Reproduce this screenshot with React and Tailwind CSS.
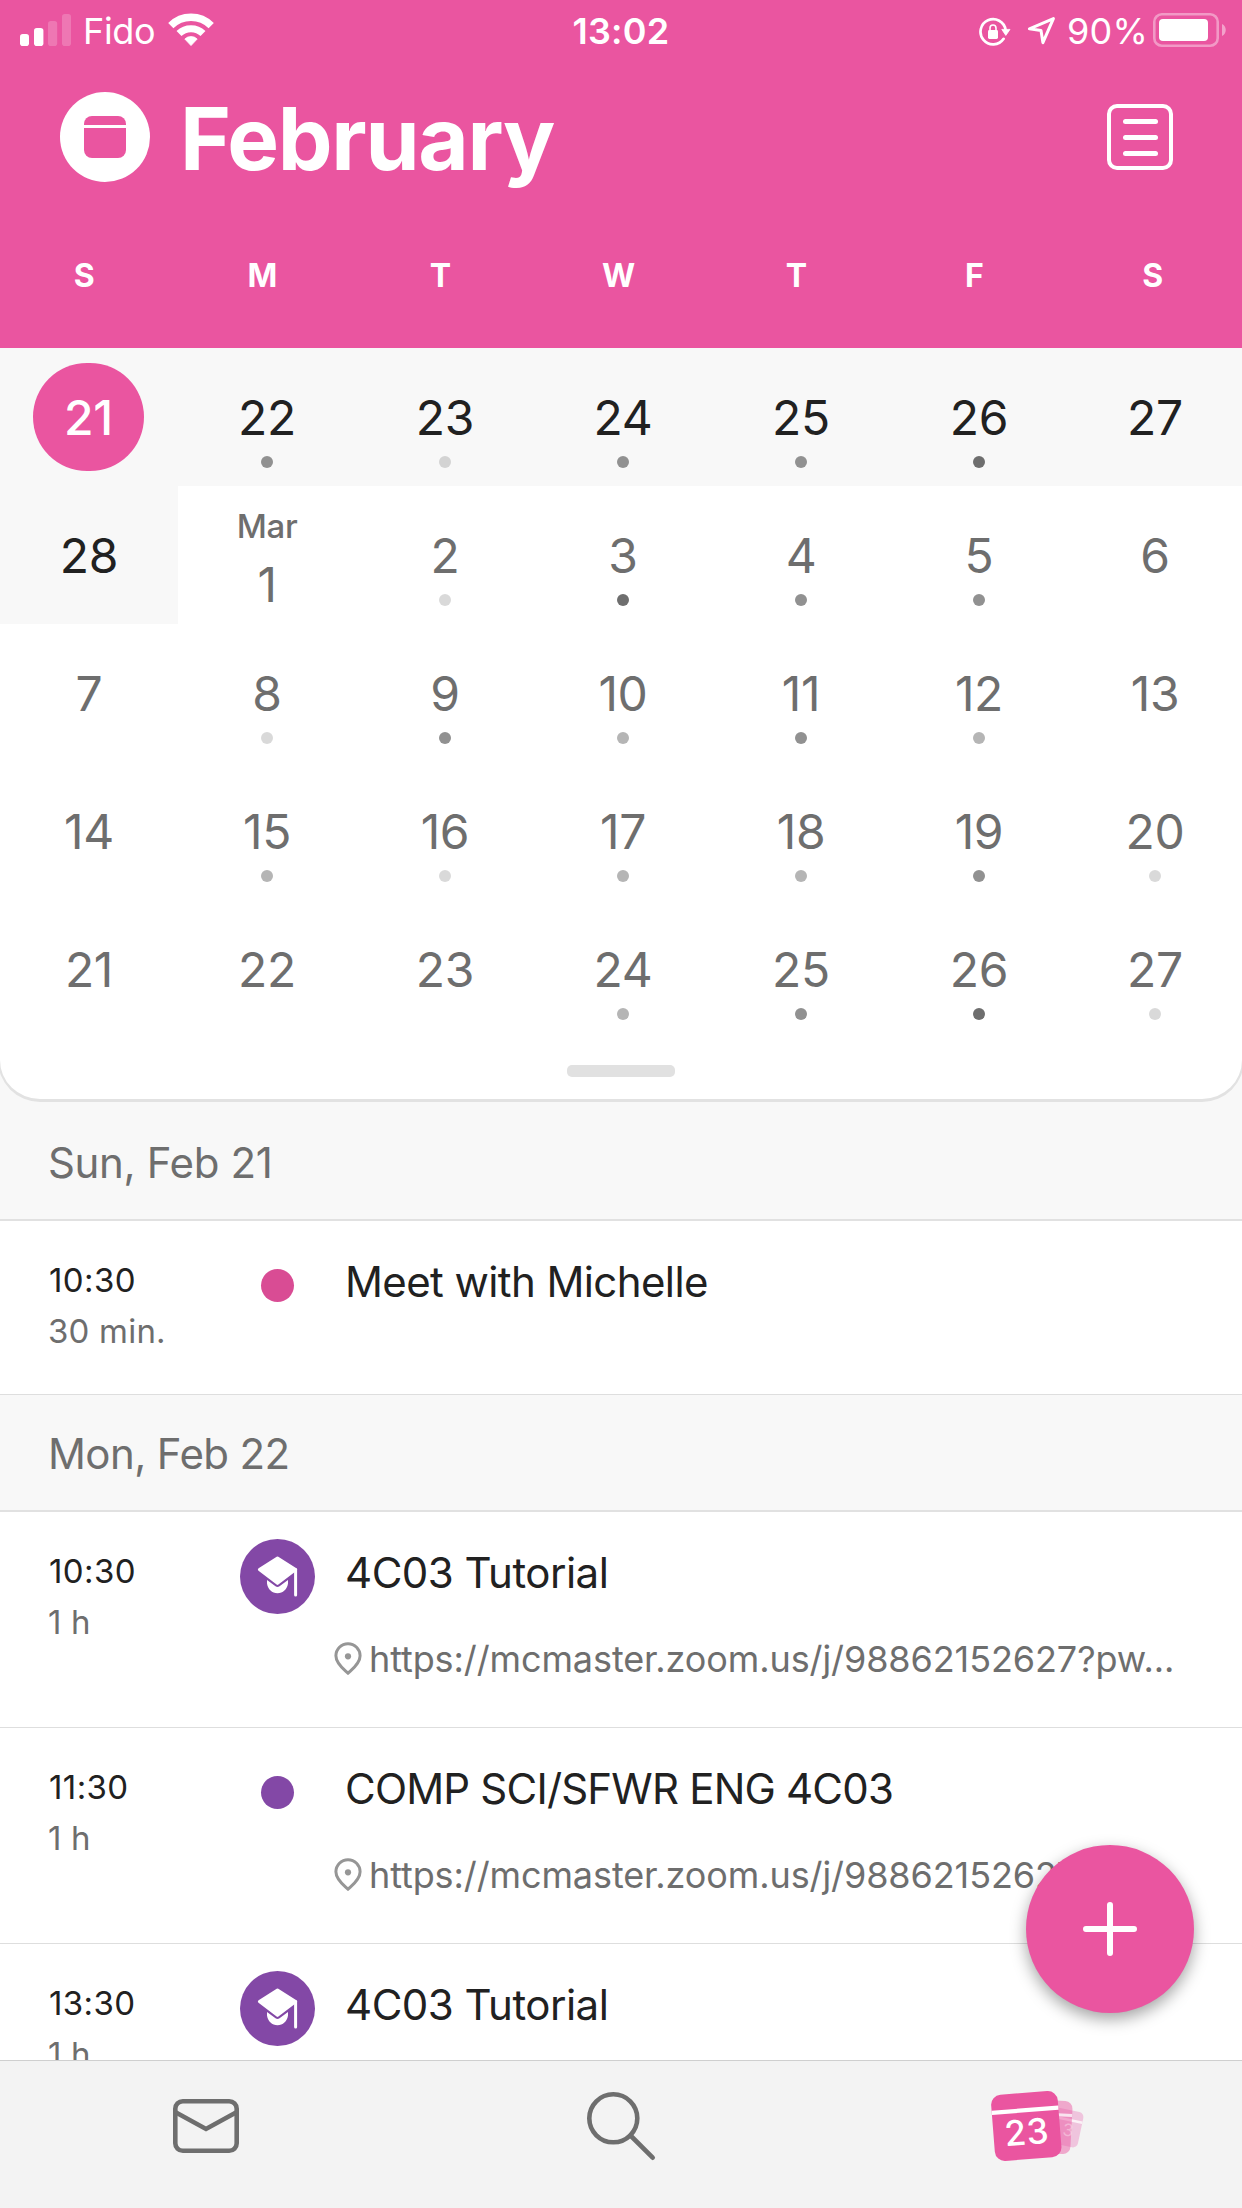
import React from "react";

const WEEKDAYS = ["S", "M", "T", "W", "T", "F", "S"];

// Each day: [label, event density 0-4]
const WEEKS = [
  [["21", 0], ["22", 3], ["23", 1], ["24", 3], ["25", 3], ["26", 4], ["27", 0]],
  [["28", 0], ["1", 0], ["2", 1], ["3", 4], ["4", 3], ["5", 3], ["6", 0]],
  [["7", 0], ["8", 1], ["9", 3], ["10", 2], ["11", 3], ["12", 2], ["13", 0]],
  [["14", 0], ["15", 2], ["16", 1], ["17", 2], ["18", 2], ["19", 3], ["20", 1]],
  [["21", 0], ["22", 0], ["23", 0], ["24", 2], ["25", 3], ["26", 4], ["27", 1]],
];

const DOT = {
  1: "bg-black/15",
  2: "bg-[#b5b5b5]",
  3: "bg-[#919191]",
  4: "bg-[#6e6e6e]",
};

const URL_TEXT = "https://mcmaster.zoom.us/j/98862152627?pw...";

function StatusBar() {
  return (
    <div className="grid h-[60px] grid-cols-3 text-[36px] leading-[44px] text-white">
      <div className="flex items-center pl-5">
        <svg width="51" height="32" viewBox="0 0 51 32" fill="#fff" className="shrink-0">
          <rect x="0" y="20" width="9" height="12" rx="2.8" />
          <rect x="14" y="14" width="9.4" height="18" rx="2.8" />
          <rect x="28" y="7" width="9.2" height="25" rx="2.8" opacity="0.2" />
          <rect x="42" y="0" width="9" height="32" rx="2.8" opacity="0.2" />
        </svg>
        <span className="ml-[12px] mt-[2px] w-[73px] tracking-[-0.3px]">Fido</span>
        <svg width="46" height="34" viewBox="0 0 46 34" className="ml-[12px] shrink-0" fill="none" stroke="#fff">
          <path d="M2.8 12.6 A28.6 28.6 0 0 1 43.2 12.6" strokeWidth="7.4" />
          <path d="M11 20.6 A17 17 0 0 1 35 20.6" strokeWidth="7" />
          <path d="M16.8 26 A9 9 0 0 1 29.2 26 L23 32.6 Z" fill="#fff" strokeWidth="0.8" strokeLinejoin="round" />
        </svg>
      </div>
      <div className="flex items-center justify-center">
        <span className="mt-[2px] font-semibold tracking-[0.2px]">13:02</span>
      </div>
      <div className="flex items-center justify-end pr-[15px]">
        <svg width="33" height="32" viewBox="978 16 33 32" className="mt-[3px] shrink-0">
          <path d="M1003.6 38.8 A12.6 12.6 0 1 1 1005.6 30" fill="none" stroke="#fff" strokeWidth="2.7" strokeLinecap="round" />
          <path d="M1001.8 29.4 H1010 L1005.8 35.4 Z" fill="#fff" stroke="#fff" strokeWidth="0.8" strokeLinejoin="round" />
          <rect x="988" y="30" width="10" height="9" rx="1.4" fill="#fff" />
          <path d="M990 31 V28 a3 3 0 0 1 6 0 V31" fill="none" stroke="#fff" strokeWidth="1.6" />
        </svg>
        <svg width="30" height="30" viewBox="1027 16 30 30" className="ml-[16px] mt-[1px] shrink-0">
          <path d="M1029.4 28.8 L1053.4 18.6 L1042.9 42.6 L1041 30.4 Z" fill="none" stroke="#fff" strokeWidth="3" strokeLinejoin="round" />
        </svg>
        <span className="ml-[10px] mt-[2px] tracking-[0.2px]">90%</span>
        <svg width="74" height="34" viewBox="0 0 74 34" className="ml-[5px] shrink-0">
          <rect x="1.3" y="1.3" width="63.4" height="31.4" rx="7.5" fill="none" stroke="#fff" strokeOpacity="0.4" strokeWidth="2.6" />
          <rect x="6" y="6" width="49" height="22" rx="4" fill="#fff" />
          <path d="M69 11 C74 13 74 21 69 23 Z" fill="#fff" opacity="0.45" />
        </svg>
      </div>
    </div>
  );
}

function Header() {
  return (
    <header className="flex h-[348px] shrink-0 flex-col bg-[#ea55a0] text-white">
      <StatusBar />
      <div className="flex h-[154px] items-center pl-[60px] pr-[69px]">
        <div className="flex size-[90px] items-center justify-center rounded-full bg-white">
          <div className="flex h-[42px] w-[42px] flex-col overflow-hidden rounded-[8px] bg-[#ea55a0] pt-[9px]">
            <div className="h-[3px] bg-white" />
          </div>
        </div>
        <h1 className="ml-[30px] mt-[3px] text-[87px] font-bold leading-[106px] tracking-[-1.3px]">February</h1>
        <div className="ml-auto flex size-[66px] flex-col items-center justify-center gap-[11px] rounded-[10px] border-[4.5px] border-white">
          <div className="h-[5px] w-[35px] rounded-full bg-white" />
          <div className="h-[5px] w-[35px] rounded-full bg-white" />
          <div className="h-[5px] w-[35px] rounded-full bg-white" />
        </div>
      </div>
      <div className="grid h-[124px] grid-cols-[173.5px_repeat(5,178px)_178.5px] items-center text-center text-[32px] font-bold">
        {WEEKDAYS.map((d, i) => (
          <div key={i} className={i === 0 ? "pr-[5px]" : ""}>
            {d}
          </div>
        ))}
      </div>
    </header>
  );
}

function Day({ label, density, february, selected, month }) {
  if (selected) {
    return (
      <div className="flex h-[138px] bg-[#f8f8f8] pl-[33px] pt-[15px]">
        <div className="flex h-[108px] w-[111px] items-center justify-center rounded-full bg-[#ea55a0] font-medium text-white">
          {label}
        </div>
      </div>
    );
  }
  return (
    <div
      className={
        "flex h-[138px] flex-col items-center " +
        (february ? "bg-[#f8f8f8] text-[#212121] " : "text-[#6e6e6e] ") +
        (month ? "pt-[20px]" : "pt-[40px]")
      }
    >
      {month && <span className="mb-[9px] text-[33px] font-medium leading-[40px]">{month}</span>}
      <span>{label}</span>
      {density > 0 && <span className={"mt-[9px] size-[12px] rounded-full " + DOT[density]} />}
    </div>
  );
}

function MonthGrid() {
  return (
    <section className="-mx-[2px] shrink-0 rounded-b-[42px] border-x-2 border-b-[3px] border-[#e2e2e2] bg-white">
      <div className="grid grid-cols-[repeat(6,178px)_174px] text-[48px] leading-[59px] tracking-[-0.3px]">
        {WEEKS.flatMap((week, w) =>
          week.map(([label, density], d) => (
            <Day
              key={w + "-" + d}
              label={label}
              density={density}
              february={w === 0 || (w === 1 && d === 0)}
              selected={w === 0 && d === 0}
              month={w === 1 && d === 1 ? "Mar" : null}
            />
          ))
        )}
      </div>
      <div className="flex h-[61px] justify-center pt-[27px]">
        <div className="h-[12px] w-[108px] rounded-[5px] bg-[#e1e1e1]" />
      </div>
    </section>
  );
}

function CapIcon() {
  return (
    <svg width="75" height="75" viewBox="0 0 75 75">
      <circle cx="37.5" cy="37.5" r="37.5" fill="#8348a6" />
      <path d="M37.5 19 L55.6 30.6 L37.5 44.4 L19.4 30.6 Z" fill="#fff" stroke="#fff" strokeWidth="3" strokeLinejoin="round" />
      <path d="M27 41 L35.5 47.2 Q37.5 48.6 39.5 47.2 L48 41 V44.5 C47 50.5 43 54.2 37.5 54.2 C32 54.2 28 50.5 27 44.5 Z" fill="#fff" />
      <path d="M55.6 30.5 V56" stroke="#fff" strokeWidth="3" strokeLinecap="round" />
    </svg>
  );
}

function PinIcon() {
  return (
    <svg width="28" height="34" viewBox="0 0 28 34" className="shrink-0">
      <path d="M14 31.3 C10.5 27.8 1.9 22 1.9 13.8 A12.1 12.1 0 0 1 26.1 13.8 C26.1 22 17.5 27.8 14 31.3 Z" fill="none" stroke="#969696" strokeWidth="3" strokeLinejoin="round" />
      <circle cx="14" cy="14.3" r="3.1" fill="#969696" />
    </svg>
  );
}

function SectionTitle({ children, className }) {
  return (
    <div className={"flex h-[117px] shrink-0 items-center border-b-2 border-[#e1e1e1] bg-[#f8f8f8] pl-[48px] pt-[1px] text-[42px] leading-[51px] text-[#6e6e6e] " + className}>
      {children}
    </div>
  );
}

function Event({ time, duration, title, marker, location, titleClass }) {
  return (
    <div className={"flex shrink-0 border-b border-[#dedede] bg-white pl-[49px] " + (location ? "h-[216px]" : "h-[174px]")}>
      <div className="w-[190.5px] shrink-0 pt-[34px] text-[33px] leading-[51px]">
        <div className="tracking-[0.4px] text-[#212121]">{time}</div>
        <div className="-ml-[1px] tracking-[0.2px] text-[#6e6e6e]">{duration}</div>
      </div>
      <div className="mt-[27px] flex size-[75px] shrink-0 items-center justify-center">
        {marker === "cap" ? (
          <CapIcon />
        ) : (
          <div className={"size-[33px] rounded-full " + (marker === "pink" ? "bg-[#d94c94]" : "bg-[#8348a6]")} />
        )}
      </div>
      <div className="ml-[19.5px] pt-[31px]">
        <div className={"whitespace-nowrap pl-[11px] text-[42px] leading-[60px] text-[#212121] " + titleClass}>{title}</div>
        {location && (
          <div className="mt-[34px] flex items-center text-[36px] leading-[44px] tracking-[-0.1px] text-[#6e6e6e]">
            <PinIcon />
            <span className="ml-[7px] whitespace-nowrap">{URL_TEXT}</span>
          </div>
        )}
      </div>
    </div>
  );
}

function MailIcon() {
  return (
    <svg width="120" height="110" viewBox="0 0 120 110" fill="none" stroke="#6e6e6e" strokeWidth="4.6">
      <rect x="28.3" y="30.3" width="61.4" height="49.4" rx="7.5" />
      <path d="M29 41.5 L59 58 L89 41.5" />
    </svg>
  );
}

function SearchIcon() {
  return (
    <svg width="120" height="110" viewBox="0 0 120 110" fill="none" stroke="#6e6e6e" strokeWidth="4.6">
      <circle cx="52.3" cy="47.3" r="24" />
      <path d="M69.5 64.5 L91.7 86.7" strokeLinecap="round" />
    </svg>
  );
}

function CalendarTabIcon() {
  return (
    <svg width="120" height="110" viewBox="-5 1 120 110">
      <g transform="translate(83 57) rotate(12)">
        <rect x="-18" y="-18" width="36" height="36" rx="5" fill="#efc4dd" />
        <rect x="-18" y="-9.5" width="36" height="2.6" fill="#fbf1f7" />
      </g>
      <g transform="translate(65 56.5) rotate(3)">
        <rect x="-26.5" y="-26.5" width="53" height="53" rx="7.5" fill="#ea55a0" opacity="0.48" />
        <rect x="-26.5" y="-13.8" width="53" height="3" fill="#f9e3ef" />
      </g>
      <text x="88" y="66" fontSize="17" fill="#fff" fillOpacity="0.35" textAnchor="middle" transform="rotate(8 88 60)">3</text>
      <g transform="translate(46.3 56) rotate(-4.5)">
        <rect x="-33.4" y="-33.2" width="66.8" height="66.4" rx="10" fill="#ea55a0" />
        <rect x="-33.4" y="-17.9" width="66.8" height="4.2" fill="#fff" />
        <text x="0" y="18.5" fontSize="35" fontWeight="500" letterSpacing="0.5" fill="#fff" textAnchor="middle">23</text>
      </g>
    </svg>
  );
}

export default function App() {
  return (
    <div className="relative flex h-[2208px] w-[1242px] flex-col overflow-hidden bg-[#f8f8f8] font-['Inter',sans-serif]">
      <Header />
      <MonthGrid />
      <main className="flex min-h-0 flex-1 flex-col overflow-hidden pt-[2px]">
        <SectionTitle className="tracking-[-0.35px]">Sun, Feb 21</SectionTitle>
        <Event time="10:30" duration="30 min." title="Meet with Michelle" marker="pink" titleClass="tracking-[-0.6px]" />
        <SectionTitle className="tracking-[-0.6px]">Mon, Feb 22</SectionTitle>
        <Event time="10:30" duration="1 h" title="4C03 Tutorial" marker="cap" location titleClass="tracking-[-0.5px]" />
        <Event time="11:30" duration="1 h" title="COMP SCI/SFWR ENG 4C03" marker="purple" location titleClass="tracking-[-0.8px]" />
        <Event time="13:30" duration="1 h" title="4C03 Tutorial" marker="cap" titleClass="tracking-[-0.5px]" />
      </main>
      <nav className="grid h-[148px] shrink-0 grid-cols-3 justify-items-center border-t border-[#cfcfcf] bg-[#f3f3f3] pt-[10px]">
        <MailIcon />
        <SearchIcon />
        <CalendarTabIcon />
      </nav>
      <button className="absolute left-[1026px] top-[1845px] flex size-[168px] items-center justify-center rounded-full bg-[#ea55a0] shadow-[0_6px_16px_rgba(0,0,0,0.36)]">
        <svg width="54" height="54" viewBox="0 0 54 54" stroke="#fff" strokeWidth="6" strokeLinecap="round">
          <path d="M3 27 H51 M27 3 V51" />
        </svg>
      </button>
    </div>
  );
}
